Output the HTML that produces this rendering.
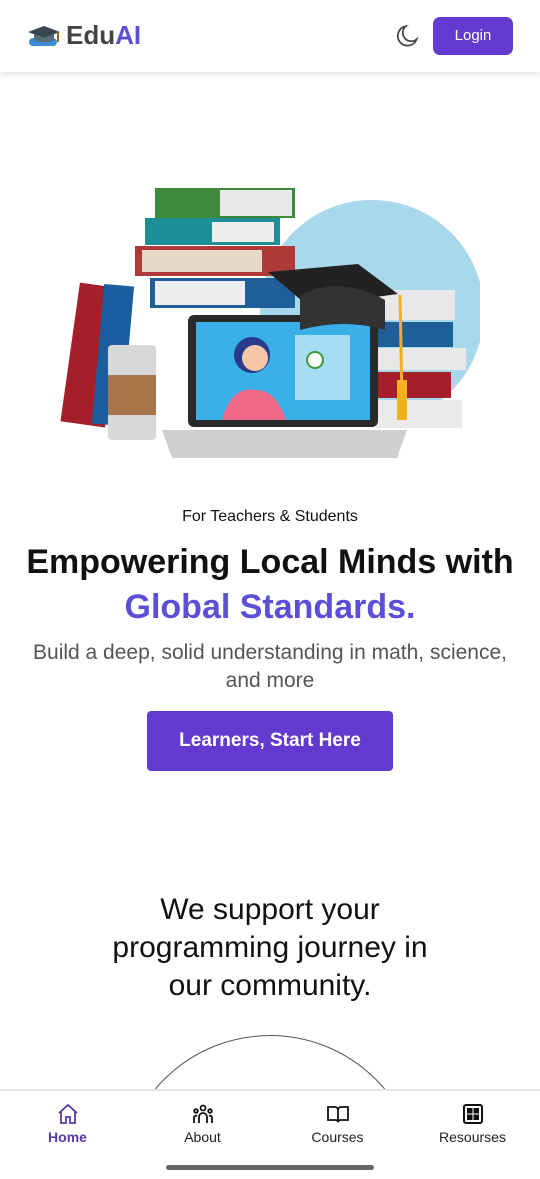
<!DOCTYPE html>
<html style="width:540px;height:1179px;overflow:hidden"><head><meta charset="utf-8"><style>
*{margin:0;padding:0;box-sizing:border-box}
body{width:540px;height:1179px;background:#fff;font-family:"Liberation Sans",sans-serif;position:relative;overflow:hidden;color:#111}
.hdr{position:absolute;left:0;top:0;width:540px;height:72px;background:#fff;box-shadow:0 2px 6px rgba(0,0,0,.12);z-index:2}
.logo{position:absolute;left:66px;top:20px;font-size:26px;font-weight:bold;color:#444}
.logo span{color:#5a4fd6}
.login{position:absolute;left:433px;top:17px;width:80px;height:38px;background:#6439d0;border-radius:7px;color:#fff;font-size:15px;text-align:center;line-height:38px}
.c{position:absolute;left:0;width:540px;text-align:center}
.btn{position:absolute;left:147px;top:711px;width:246px;height:60px;background:#6439d0;border-radius:4px;color:#fff;font-weight:bold;font-size:19px;text-align:center;line-height:60px}
.nav{position:absolute;left:0;top:1089px;width:540px;height:90px;background:#fff;border-top:2px solid #e4e4e8}
.ni{position:absolute;top:38px;width:135px;text-align:center;font-size:14px;color:#222}
.ni svg{position:absolute;top:-27px;left:56px}
</style></head><body>
<div class="hdr">
<svg style="position:absolute;left:26px;top:24px" width="38" height="26" viewBox="0 0 38 26"><rect x="3" y="14" width="28" height="8" rx="4" fill="#3a8ed8"/><path d="M2 8 L18 2 L34 8 L18 14Z" fill="#37474f"/><path d="M8 10v6c4 3 16 3 20 0v-6l-10 4z" fill="#546e7a"/><line x1="32" y1="8" x2="32" y2="18" stroke="#8a6a20" stroke-width="2"/></svg>
<div class="logo">Edu<span>AI</span></div>
<svg style="position:absolute;left:395px;top:23px" width="26" height="26" viewBox="0 0 24 24" fill="none" stroke="#444" stroke-width="1.6"><path d="M20 15A9 9 0 1 1 10 3a7 7 0 0 0 10 12z"/></svg>
<div class="login">Login</div>
</div>
<svg style="position:absolute;left:60px;top:180px" width="420" height="285" viewBox="60 180 420 285">
<circle cx="372" cy="312" r="112" fill="#a8d8ec"/>
<rect x="155" y="188" width="140" height="30" fill="#3d8a3a"/><rect x="220" y="190" width="72" height="26" fill="#e8e8e8"/>
<rect x="145" y="218" width="135" height="27" fill="#1d8f96"/><rect x="212" y="222" width="62" height="20" fill="#eee"/>
<rect x="135" y="246" width="160" height="30" fill="#b03a3a"/><rect x="142" y="250" width="120" height="22" fill="#e8d8c8"/>
<rect x="150" y="278" width="145" height="30" fill="#1e5f9a"/><rect x="155" y="281" width="90" height="24" fill="#eee"/>
<rect x="70" y="285" width="45" height="140" fill="#a41f2a" transform="rotate(8 92 355)"/>
<rect x="98" y="285" width="30" height="140" fill="#1a5ea0" transform="rotate(5 113 355)"/>
<rect x="108" y="345" width="48" height="95" rx="4" fill="#d8d8d8"/><rect x="108" y="375" width="48" height="40" fill="#a77548"/>
<rect x="380" y="290" width="75" height="30" fill="#e8e8e8"/><rect x="378" y="322" width="75" height="25" fill="#1e5f9a"/>
<rect x="378" y="348" width="88" height="22" fill="#e8e8e8"/><rect x="376" y="372" width="75" height="26" fill="#a41f2a"/>
<rect x="376" y="400" width="86" height="28" fill="#eaeaea"/>
<rect x="188" y="315" width="190" height="112" rx="6" fill="#2a2a2a"/><rect x="196" y="322" width="174" height="98" fill="#3ab0e8"/>
<circle cx="252" cy="355" r="18" fill="#2a3a8a"/><circle cx="255" cy="358" r="13" fill="#f6c6a8"/><path d="M222 420 q10-35 34-30 q20 0 30 30z" fill="#f26a8a"/>
<rect x="295" y="335" width="55" height="65" fill="#a8dcf2"/><circle cx="315" cy="360" r="8" fill="#fff" stroke="#3a9a3a" stroke-width="2"/>
<path d="M162 430 h245 l-10 28 h-225z" fill="#cfcfcf"/>
<path d="M268 272 l90 -8 l40 30 l-90 12z" fill="#222"/><path d="M300 295 q40 -20 85 5 v30 q-40 -12 -85 0z" fill="#333"/>
<line x1="400" y1="295" x2="402" y2="400" stroke="#f2b01e" stroke-width="3"/><rect x="397" y="380" width="10" height="40" fill="#f2b01e"/>
</svg>
<div class="c" style="top:508px;font-size:16px">For Teachers &amp; Students</div>
<div class="c" style="top:540px;font-size:34px;font-weight:bold;line-height:45px">Empowering Local Minds with<br><span style="color:#5a4fd6">Global Standards.</span></div>
<div class="c" style="top:639px;font-size:21px;color:#555;line-height:28px">Build a deep, solid understanding in math, science,<br>and more</div>
<div class="btn">Learners, Start Here</div>
<div class="c" style="top:891px;font-size:30px;line-height:38px;color:#111">We support your<br>programming journey in<br>our community.</div>
<div style="position:absolute;left:120px;top:1035px;width:300px;height:54px;overflow:hidden"><div style="width:300px;height:300px;border:1.3px solid #555;border-radius:50%"></div></div>
<div class="nav">
<div class="ni" style="left:0;color:#5a3aa0;font-weight:bold"><svg width="24" height="24" viewBox="0 0 24 24" fill="none" stroke="#5a3aa0" stroke-width="1.8"><path d="M3 11 L12 3 L21 11 M5 9v12h5v-6h4v6h5V9"/></svg>Home</div>
<div class="ni" style="left:135px"><svg width="24" height="24" viewBox="0 0 24 24" fill="none" stroke="#111" stroke-width="1.8"><circle cx="12" cy="6" r="2.5"/><circle cx="5" cy="9" r="1.8"/><circle cx="19" cy="9" r="1.8"/><path d="M8 21v-6a4 4 0 0 1 8 0v6M3 21v-5a2 2 0 0 1 3-2M21 21v-5a2 2 0 0 0-3-2"/></svg>About</div>
<div class="ni" style="left:270px"><svg width="24" height="24" viewBox="0 0 24 24" fill="none" stroke="#111" stroke-width="1.8"><path d="M2 5h7a3 3 0 0 1 3 3v12a3 3 0 0 0-3-2H2zM22 5h-7a3 3 0 0 0-3 3v12a3 3 0 0 1 3-2h7z"/></svg>Courses</div>
<div class="ni" style="left:405px"><svg width="24" height="24" viewBox="0 0 24 24" fill="none" stroke="#111" stroke-width="2"><rect x="3" y="3" width="18" height="18" rx="2"/><rect x="7" y="7" width="3.5" height="3.5" fill="#111"/><rect x="13.5" y="7" width="3.5" height="3.5" fill="#111"/><rect x="7" y="13.5" width="3.5" height="3.5" fill="#111"/><rect x="13.5" y="13.5" width="3.5" height="3.5" fill="#111"/></svg>Resourses</div>
<div style="position:absolute;left:166px;top:74px;width:208px;height:5px;border-radius:3px;background:#666"></div>
</div>
</body></html>
